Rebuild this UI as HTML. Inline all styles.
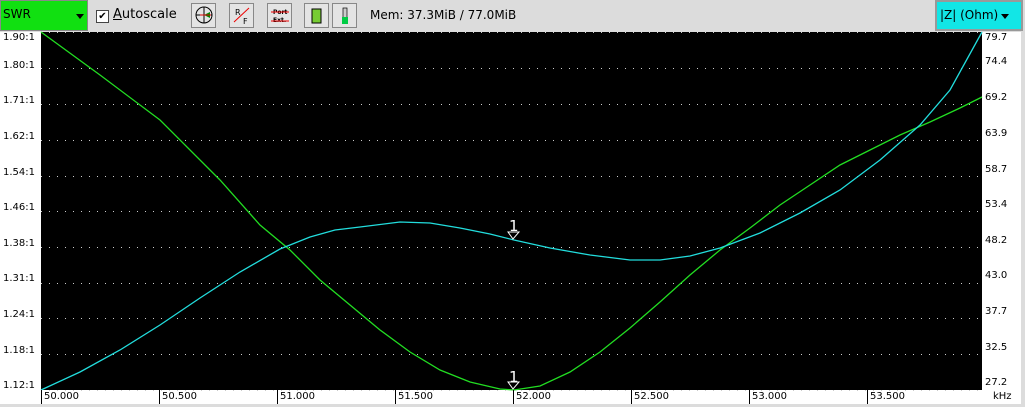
<!DOCTYPE html>
<html><head><style>
body{margin:0;width:1025px;height:407px;background:#dcdcdc;position:relative;overflow:hidden;font-family:"DejaVu Sans","Liberation Sans",sans-serif;}
.a{position:absolute}
.btn{position:absolute;top:3px;width:25px;height:25px;border:1px solid #888;background:#e4e4e4;box-sizing:border-box}
.ll{position:absolute;left:3px;font-size:10px;color:#000}
.rl{position:absolute;left:985px;font-size:10px;color:#000}
.xl{position:absolute;top:390px;font-size:10px;border-left:1px solid #000;padding-left:2px;height:14px;line-height:14px}
</style></head><body>
<div class="a" style="left:0;top:0;width:88px;height:31px;background:#11e011;border:1px solid #888;box-sizing:border-box"></div>
<div class="a" style="left:3px;top:7px;font-size:12px">SWR</div>
<div class="a" style="left:76px;top:14px;width:0;height:0;border-left:4px solid transparent;border-right:4px solid transparent;border-top:5px solid #000"></div>
<div class="a" style="left:96px;top:10px;width:11px;height:11px;border:1px solid #444;background:#fff;font-size:10px;line-height:11px;text-align:center">✔</div>
<div class="a" style="left:113px;top:7px;font-size:13px"><u>A</u>utoscale</div>
<div class="btn" style="left:191px"><svg width="23" height="23"><circle cx="12" cy="11" r="8" fill="none" stroke="#000"/><path d="M4 11H20M12 3V19" stroke="#000"/><path d="M12 11L18 8L18 14Z" fill="#080"/><path d="M8 11L19 11" stroke="#d00"/></svg></div>
<div class="btn" style="left:229px"><svg width="23" height="23"><path d="M4 18L19 4" stroke="#e00"/><text x="5" y="11" font-size="8">R</text><text x="13" y="20" font-size="8">F</text></svg></div>
<div class="btn" style="left:267px"><svg width="23" height="23"><text x="5" y="10" font-size="6" font-weight="bold">Port</text><text x="5" y="18" font-size="6" font-weight="bold">Ext.</text><path d="M3 8H21M3 17H21" stroke="#e00"/></svg></div>
<div class="btn" style="left:304px"><svg width="23" height="23"><rect x="7" y="5" width="9" height="14" fill="#7c3" stroke="#000"/></svg></div>
<div class="btn" style="left:332px"><svg width="23" height="23"><rect x="10" y="4" width="4" height="12" fill="#ccc" stroke="#000" stroke-width=".7"/><rect x="9" y="13" width="6" height="7" fill="#0c4"/></svg></div>
<div class="a" style="left:370px;top:8px;font-size:12px">Mem: 37.3MiB / 77.0MiB</div>
<div class="a" style="left:935px;top:0;width:88px;height:31px;background:#12e6e6;border:2px solid #999;box-sizing:border-box"></div>
<div class="a" style="left:940px;top:8px;font-size:12px">|Z| (Ohm)</div>
<div class="a" style="left:1001px;top:14px;width:0;height:0;border-left:4px solid transparent;border-right:4px solid transparent;border-top:5px solid #000"></div>
<div class="a" style="left:0;top:32px;width:1021px;height:372px;background:#fff"></div>
<svg class="a" style="left:0;top:0" width="1025" height="407">
<rect x="41" y="32" width="941" height="358" fill="#000"/>
<g stroke="#ccc" stroke-dasharray="1 7">
<path d="M41 32.5H982M41 68.5H982M41 104.5H982M41 140.5H982M41 176.5H982M41 211.5H982M41 247.5H982M41 283.5H982M41 318.5H982M41 354.5H982M41 390.5H982"/>
</g>
<polyline fill="none" stroke="#22dd22" stroke-width="1.3" points="41,32 100,75 160,120 220,180 260,225 290,250 320,280 350,305 380,330 410,352 440,370 470,382 500,389 514,390 540,386 570,372 600,352 630,328 660,302 690,275 720,250 750,228 780,205 810,185 840,165 870,150 900,135 930,122 960,108 982,97"/>
<polyline fill="none" stroke="#22dddd" stroke-width="1.3" points="41,390 80,372 120,350 160,325 200,298 240,272 280,249 310,237 335,230 360,227 400,222 430,223 460,228 490,234 514,240 550,248 590,255 630,260 660,260 690,256 720,248 760,233 800,213 840,190 880,160 920,125 950,90 982,32"/>
<g fill="none" stroke="#fff"><path d="M508 232H519L513 239Z"/><path d="M508 382H519L513 389Z"/></g>
<text x="509" y="231" fill="#fff" font-size="15">1</text>
<text x="509" y="382" fill="#fff" font-size="15">1</text>
</svg>
<div class="ll" style="top:32px">1.90:1</div><div class="ll" style="top:60px">1.80:1</div><div class="ll" style="top:95px">1.71:1</div><div class="ll" style="top:131px">1.62:1</div><div class="ll" style="top:167px">1.54:1</div><div class="ll" style="top:202px">1.46:1</div><div class="ll" style="top:238px">1.38:1</div><div class="ll" style="top:273px">1.31:1</div><div class="ll" style="top:309px">1.24:1</div><div class="ll" style="top:345px">1.18:1</div><div class="ll" style="top:380px">1.12:1</div>
<div class="rl" style="top:32px">79.7</div><div class="rl" style="top:56px">74.4</div><div class="rl" style="top:92px">69.2</div><div class="rl" style="top:128px">63.9</div><div class="rl" style="top:164px">58.7</div><div class="rl" style="top:199px">53.4</div><div class="rl" style="top:235px">48.2</div><div class="rl" style="top:270px">43.0</div><div class="rl" style="top:306px">37.7</div><div class="rl" style="top:342px">32.5</div><div class="rl" style="top:377px">27.2</div>
<div class="xl" style="left:41px">50.000</div><div class="xl" style="left:159px">50.500</div><div class="xl" style="left:277px">51.000</div><div class="xl" style="left:395px">51.500</div><div class="xl" style="left:513px">52.000</div><div class="xl" style="left:631px">52.500</div><div class="xl" style="left:749px">53.000</div><div class="xl" style="left:867px">53.500</div>
<div class="a" style="left:993px;top:390px;font-size:10px;line-height:14px">kHz</div>
</body></html>
